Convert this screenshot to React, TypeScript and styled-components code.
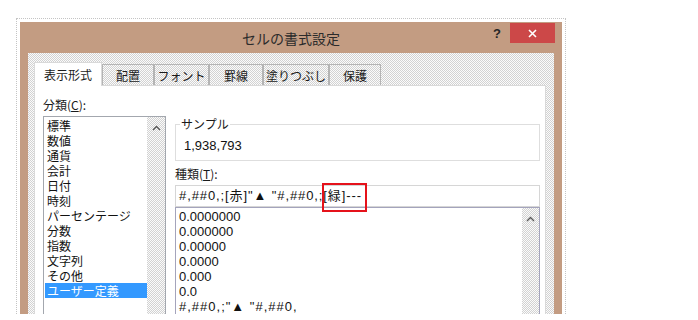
import styled, { createGlobalStyle } from 'styled-components';

const GlobalStyle = createGlobalStyle`
  html, body {
    margin: 0;
    padding: 0;
    background: #ffffff;
  }
  body {
    font-family: "Liberation Sans", "Noto Sans CJK JP", sans-serif;
    font-size: 12px;
    color: #000000;
  }
`;

const dither = `
  background-color: #f4f4f4;
  background-image: repeating-conic-gradient(#d2d2d2 0 25%, #fbfbfb 0 50%);
  background-size: 2px 2px;
`;

// the screenshot cuts the dialog off a few pixels above the bottom edge
const Stage = styled.div`
  box-sizing: border-box;
  height: 314px;
  overflow: hidden;
  padding: 22px 0 0 20px;
`;

const Window = styled.div`
  box-sizing: border-box;
  width: 542px;
  height: 320px;
  padding: 0 8px;
  background: #c39c82;
  outline: 1px dotted #c4c4c4;
  outline-offset: 3px;
`;

const TitleBar = styled.div`
  height: 31px;
  display: grid;
  grid-template-columns: 1fr auto 1fr;
  align-items: center;
`;

const Title = styled.div`
  grid-column: 2;
  font-family: "Noto Sans CJK JP", sans-serif;
  font-size: 14px;
  color: #2b2b2b;
  padding-top: 1px;
`;

const Controls = styled.div`
  grid-column: 3;
  align-self: start;
  justify-self: end;
  display: flex;
  margin-right: -1px;
  padding-top: 1px;
`;

const HelpButton = styled.div`
  width: 26px;
  height: 20px;
  display: flex;
  align-items: center;
  justify-content: center;
  font-family: "Liberation Sans", sans-serif;
  font-weight: bold;
  font-size: 13px;
  color: #262626;
`;

const CloseButton = styled.div`
  width: 45px;
  height: 20px;
  background: #cc4848;
  display: flex;
  align-items: center;
  justify-content: center;
`;

const Body = styled.div`
  ${dither}
  padding: 9px 8px 0 6px;
  height: 300px;
`;

const TabRow = styled.div`
  display: flex;
  align-items: flex-end;
  height: 23px;
`;

const Tab = styled.div<{ $active?: boolean; $w: number }>`
  box-sizing: border-box;
  width: ${p => p.$w}px;
  height: ${p => (p.$active ? 24 : 21)}px;
  margin-bottom: ${p => (p.$active ? -1 : 0)}px;
  position: relative;
  z-index: ${p => (p.$active ? 1 : 0)};
  display: flex;
  align-items: center;
  justify-content: center;
  font-family: "Noto Sans CJK JP", sans-serif;
  font-size: 12px;
  color: #1a1a1a;
  border: 1px solid ${p => (p.$active ? '#d9d9d9' : '#b4b4b4')};
  border-bottom: none;
  ${p => (p.$active ? 'background: #ffffff;' : dither)}
`;

const Panel = styled.div`
  background: #ffffff;
  border: 1px solid #d9d9d9;
  display: flex;
  gap: 9px;
  padding: 11px 5px 0 8px;
  height: 260px;
`;

const LeftColumn = styled.div`
  width: 123px;
  display: flex;
  flex-direction: column;
`;

const RightColumn = styled.div`
  flex: 1;
  display: flex;
  flex-direction: column;
  padding-top: 20px;
`;

const Label = styled.div<{ $gap?: number }>`
  font-family: "Noto Sans CJK JP", sans-serif;
  font-size: 12px;
  line-height: 15px;
  margin-top: ${p => p.$gap ?? 0}px;
  margin-bottom: 4px;
  color: #1a1a1a;
`;

const ListBox = styled.div<{ $border: string }>`
  box-sizing: border-box;
  flex: 1;
  display: flex;
  border: 1px solid ${p => p.$border};
  background: #ffffff;
  min-height: 0;
`;

const Items = styled.div`
  flex: 1;
  padding-top: 1px;
  overflow: hidden;
`;

const CategoryItem = styled.div<{ $selected?: boolean }>`
  font-family: "Noto Sans CJK JP", sans-serif;
  font-size: 12px;
  line-height: 15px;
  height: 15px;
  margin: 0 0 0 1px;
  padding-left: 2px;
  white-space: nowrap;
  background: ${p => (p.$selected ? '#3399ff' : 'transparent')};
  color: ${p => (p.$selected ? '#ffffff' : '#111111')};
`;

// format codes with # and punctuation render wider in the original UI font
const FormatItem = styled.div<{ $code?: boolean }>`
  font-size: 13px;
  line-height: 15px;
  height: 15px;
  padding-left: 3px;
  white-space: nowrap;
  letter-spacing: ${p => (p.$code ? 1 : 0)}px;
  color: #111111;
`;

const ScrollBar = styled.div<{ $w: number }>`
  ${dither}
  width: ${p => p.$w}px;
  display: flex;
  justify-content: center;
  padding-top: 8px;
`;

const SampleBox = styled.fieldset`
  margin: 0;
  padding: 7px 8px 7px 8px;
  border: 1px solid #dedede;
  min-width: 0;
`;

const SampleLegend = styled.legend`
  font-family: "Noto Sans CJK JP", sans-serif;
  font-size: 12px;
  line-height: 14px;
  padding: 0 1px;
  margin-left: -4px;
  color: #1a1a1a;
`;

const SampleValue = styled.div`
  font-size: 13px;
  line-height: 15px;
  color: #111111;
`;

const InputWrap = styled.div`
  position: relative;
`;

const TextBox = styled.div`
  box-sizing: border-box;
  height: 22px;
  border: 1px solid #d6d6d6;
  padding: 0 3px;
  font-size: 13px;
  line-height: 20px;
  letter-spacing: 0.9px;
  white-space: nowrap;
  color: #111111;
`;

const RedMark = styled.div`
  position: absolute;
  left: 147px;
  top: -2px;
  width: 45px;
  height: 29px;
  box-sizing: border-box;
  border: 2px solid #e5121b;
  z-index: 2;
`;

const Arrow = () => (
  <svg width="9" height="6" viewBox="0 0 9 6">
    <path d="M1 5 L4.5 1.5 L8 5" fill="none" stroke="#5a5a5a" strokeWidth="1.4" />
  </svg>
);

const TABS = [
  { label: '表示形式', w: 68 },
  { label: '配置', w: 52 },
  { label: 'フォント', w: 55 },
  { label: '罫線', w: 54 },
  { label: '塗りつぶし', w: 66 },
  { label: '保護', w: 52 },
];

const CATEGORIES = [
  '標準', '数値', '通貨', '会計', '日付', '時刻', 'パーセンテージ',
  '分数', '指数', '文字列', 'その他', 'ユーザー定義',
];

const FORMATS = [
  '0.0000000',
  '0.000000',
  '0.00000',
  '0.0000',
  '0.000',
  '0.0',
  '#,##0,;"▲ "#,##0,',
];

export default function App() {
  return (
    <>
      <GlobalStyle />
      <Stage>
        <Window>
          <TitleBar>
            <Title>セルの書式設定</Title>
            <Controls>
              <HelpButton>?</HelpButton>
              <CloseButton>
                <svg width="9" height="9" viewBox="0 0 9 9">
                  <path d="M1 1 L8 8 M8 1 L1 8" stroke="#ffffff" strokeWidth="1.6" />
                </svg>
              </CloseButton>
            </Controls>
          </TitleBar>

          <Body>
            <TabRow>
              {TABS.map((t, i) => (
                <Tab key={t.label} $w={t.w} $active={i === 0}>{t.label}</Tab>
              ))}
            </TabRow>

            <Panel>
              <LeftColumn>
                <Label>分類(<u>C</u>):</Label>
                <ListBox $border="#a3a7ae">
                  <Items>
                    {CATEGORIES.map(c => (
                      <CategoryItem key={c} $selected={c === 'ユーザー定義'}>{c}</CategoryItem>
                    ))}
                  </Items>
                  <ScrollBar $w={18}><Arrow /></ScrollBar>
                </ListBox>
              </LeftColumn>

              <RightColumn>
                <SampleBox>
                  <SampleLegend>サンプル</SampleLegend>
                  <SampleValue>1,938,793</SampleValue>
                </SampleBox>

                <Label $gap={5}>種類(<u>T</u>):</Label>
                <InputWrap>
                  <TextBox>#,##0,;[赤]"▲ "#,##0,;[緑]---</TextBox>
                  <RedMark />
                </InputWrap>
                <ListBox $border="#a4a4bc">
                  <Items>
                    {FORMATS.map(f => (
                      <FormatItem key={f} $code={f.includes('#')}>{f}</FormatItem>
                    ))}
                  </Items>
                  <ScrollBar $w={17}><Arrow /></ScrollBar>
                </ListBox>
              </RightColumn>
            </Panel>
          </Body>
        </Window>
      </Stage>
    </>
  );
}
